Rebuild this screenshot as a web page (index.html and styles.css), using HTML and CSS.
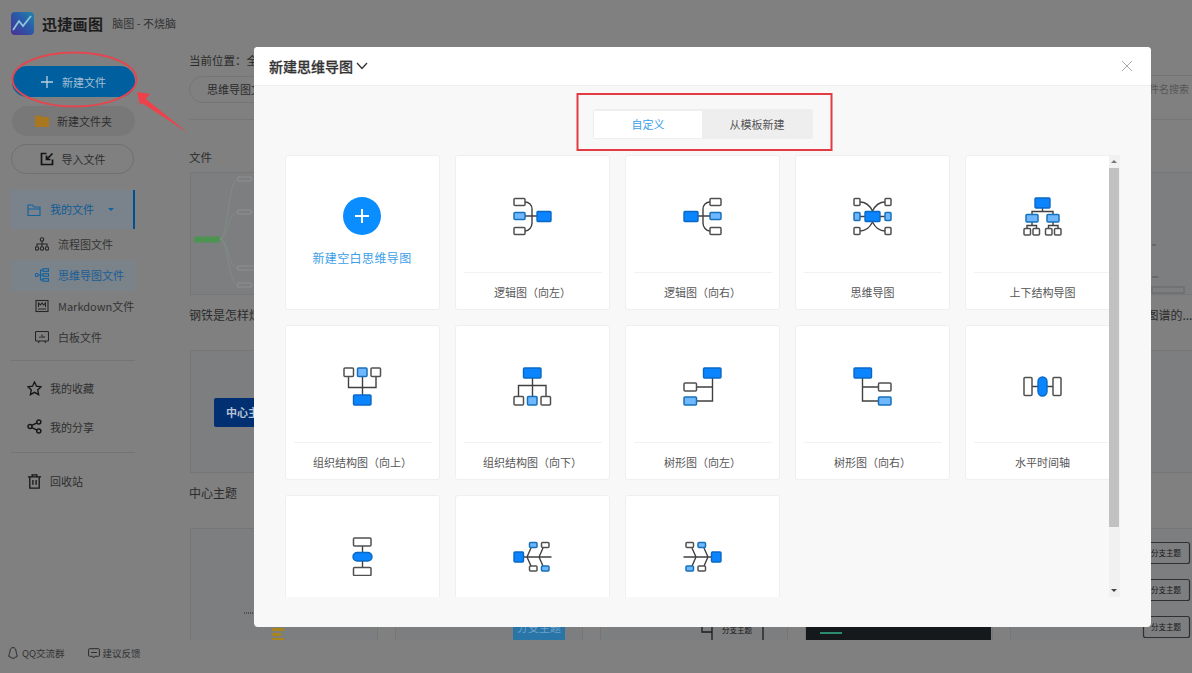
FILE: index.html
```html
<!DOCTYPE html>
<html lang="zh-CN">
<head>
<meta charset="utf-8">
<title>迅捷画图</title>
<link rel="stylesheet" href="styles.css">
</head>
<body>
<div class="app">
  <header class="top">
    <svg class="logo" viewBox="0 0 23 23"><defs><linearGradient id="lg" x1="0" y1="1" x2="1" y2="0"><stop offset="0" stop-color="#4a2f96"/><stop offset=".55" stop-color="#2b5aa8"/><stop offset="1" stop-color="#1f86ac"/></linearGradient></defs><rect width="23" height="23" rx="4" fill="url(#lg)"/><path d="M2 18 L8 9 L12 14 L20 4" fill="none" stroke="#8fc4d8" stroke-width="1.8"/></svg>
    <span class="brand">迅捷画图</span>
    <span class="slogan">脑图 - 不烧脑</span>
  </header>
  <div class="cols">
    <aside class="side">
      <button class="btn primary"><svg class="plus-ic" viewBox="0 0 12 12"><path d="M6 0V12M0 6H12"/></svg>新建文件</button>
      <button class="btn soft"><svg class="folder-ic" viewBox="0 0 14 12"><path d="M0 1.500Q0 .5 1 .5H5L6.500 2H13Q14 2 14 3V11Q14 12 13 12H1Q0 12 0 11Z"/></svg>新建文件夹</button>
      <button class="btn line"><svg class="ic14 import" viewBox="0 0 14 14"><path d="M6.500 1.500H1.500V12.500H12.500V7.500M12.500 1.500 7 7M6.500 3.500V7.500H10.500"/></svg>导入文件</button>
      <div class="myfiles">
        <svg class="ic14 blue" viewBox="0 0 14 14"><path d="M1 2H5.500L7 4H13V12.500H1ZM1 6H13"/></svg>
        <span>我的文件</span><i class="caret"></i>
      </div>
      <a class="sub"><svg class="ic14" viewBox="0 0 14 14"><circle cx="7" cy="2.500" r="1.700"/><circle cx="2" cy="11.500" r="1.700"/><circle cx="7" cy="11.500" r="1.700"/><circle cx="12" cy="11.500" r="1.700"/><path d="M7 4.200V9.800M2 9.800V7H12V9.800"/></svg>流程图文件</a>
      <a class="sub on"><svg class="ic14 blue" viewBox="0 0 14 14"><circle cx="1.800" cy="7" r="1.500"/><rect x="8" y=".8" width="5.500" height="2.600"/><rect x="8" y="5.700" width="5.500" height="2.600"/><rect x="8" y="10.600" width="5.500" height="2.600"/><path d="M3.300 7H8M8 2.100H5.500V11.900H8"/></svg>思维导图文件</a>
      <a class="sub"><svg class="ic14" viewBox="0 0 14 14"><rect x="1" y="1.500" width="12" height="11"/><path d="M3.500 8V4L5.500 6 7 4 8.500 6 10.500 4V8M3 10H11"/></svg>Markdown文件</a>
      <a class="sub"><svg class="ic14" viewBox="0 0 14 14"><rect x=".5" y="1.500" width="13" height="9.500" rx="1"/><path d="M5 8V6.500M7 8V4.500M9 8V6M4 11 3.500 13M10 11 10.500 13"/></svg>白板文件</a>
      <hr class="rule rule-a">
      <a class="nav"><svg class="ic14 dark" viewBox="0 0 16 16"><path d="M8 1 10.100 5.600 15 6.200 11.400 9.600 12.400 14.600 8 12.100 3.600 14.600 4.600 9.600 1 6.200 5.900 5.600Z"/></svg>我的收藏</a>
      <a class="nav"><svg class="ic14 dark" viewBox="0 0 14 14"><circle cx="2.800" cy="7" r="1.900"/><circle cx="11" cy="2.800" r="1.900"/><circle cx="11" cy="11.200" r="1.900"/><path d="M4.500 6 9.300 3.600M4.500 8 9.300 10.400"/></svg>我的分享</a>
      <hr class="rule rule-b">
      <a class="nav"><svg class="ic14 dark" viewBox="0 0 14 16"><path d="M0 3H14M4.500 3V1H9.500V3M2 3V15H12V3M5.300 6.500V11.500M8.700 6.500V11.500"/></svg>回收站</a>
      <footer class="foot">
        <span class="foot-a"><svg class="ic10" viewBox="0 0 10 12"><path d="M5 .6C2.800 .6 2 2.400 2 4.200 2 6 .8 7.200 .8 9 .8 10 1.400 10 2 9.400 2.400 10.800 3.600 11.200 5 11.200S7.600 10.800 8 9.400C8.600 10 9.200 10 9.200 9 9.200 7.200 8 6 8 4.200 8 2.400 7.200 .6 5 .6Z"/></svg>QQ交流群</span>
        <span class="foot-b"><svg class="ic11" viewBox="0 0 12 11"><path d="M1.500 .7H10.500Q11.400 .7 11.400 1.600V7.400Q11.400 8.300 10.500 8.300H6.800L5.500 10 4.800 8.300H1.500Q.6 8.300 .6 7.400V1.600Q.6 .7 1.500 .7ZM3.200 4.500H8.800"/></svg>建议反馈</span>
      </footer>
    </aside>
    <main class="main">
      <div class="crumb">当前位置：全</div>
      <div class="toolbar">
        <span class="pill">思维导图文件</span>
        <span class="search">按文件名搜索</span>
      </div>
      <hr class="main-rule">
      <div class="heading">文件</div>
      <div class="files">
        <div class="tile">
          <div class="thumb"><svg class="mini" viewBox="0 0 188 123"><g class="mm"><path d="M30 67C38 67 38 7 48 7M30 67C38 67 38 40 48 40M30 67C38 67 38 96 48 96M30 67C38 67 38 113 48 113M61 7H66M61 40H66M70 96H66M61 113H66"/></g><rect x="4" y="64.500" width="26" height="6" class="mm-root"/><rect x="48" y="5" width="13" height="4" class="mm-node"/><rect x="48" y="38" width="13" height="4" class="mm-node"/><rect x="48" y="94" width="22" height="4" class="mm-node"/><rect x="48" y="111" width="13" height="4" class="mm-node"/></svg></div>
          <div class="caption">钢铁是怎样炼成的</div>
        </div>
        <div class="tile"><div class="thumb"></div><div class="caption"></div></div>
        <div class="tile"><div class="thumb"></div><div class="caption"></div></div>
        <div class="tile"><div class="thumb"></div><div class="caption"></div></div>
        <div class="tile">
          <div class="thumb"><svg class="mini" viewBox="0 0 188 123"><rect x="142" y="115" width="32" height="6" class="tag"/><path d="M142 73H146M142 105H148" class="tick"/></svg></div>
          <div class="caption">如何绘制一张完整的&nbsp; 知识图谱的...</div>
        </div>
        <div class="tile">
          <div class="thumb"><svg class="mini" viewBox="0 0 188 123"><rect x="24" y="48" width="100" height="29" rx="2" class="navy"/><text x="36" y="67" class="navy-t">中心主题</text></svg></div>
          <div class="caption">中心主题</div>
        </div>
        <div class="tile"><div class="thumb"></div><div class="caption"></div></div>
        <div class="tile"><div class="thumb"></div><div class="caption"></div></div>
        <div class="tile"><div class="thumb"></div><div class="caption"></div></div>
        <div class="tile"><div class="thumb"></div><div class="caption"></div></div>
        <div class="tile">
          <div class="thumb"><svg class="mini" viewBox="0 0 188 123"><path d="M54 85H64" class="dots"/><rect x="82" y="100" width="12" height="3" class="gold"/><rect x="82" y="105" width="9" height="3" class="gold"/><rect x="82" y="110" width="12" height="3" class="gold"/></svg></div>
        </div>
        <div class="tile">
          <div class="thumb"><svg class="mini" viewBox="0 0 188 123"><rect x="118" y="85" width="52" height="27" class="teal"/><text x="144" y="104" class="teal-t">分支主题</text></svg></div>
        </div>
        <div class="tile">
          <div class="thumb"><svg class="mini" viewBox="0 0 188 123"><path d="M102 99V104H112M112 85V123M163 85V123" class="branch"/><text x="137" y="105" class="tiny-t">分支主题</text></svg></div>
        </div>
        <div class="tile">
          <div class="thumb"><svg class="mini" viewBox="0 0 188 123"><rect x="0" y="99" width="186" height="24" class="blackbox"/><rect x="15" y="104" width="22" height="2" class="greenbar"/></svg></div>
        </div>
        <div class="tile">
          <div class="thumb"><svg class="mini" viewBox="0 0 188 123"><rect x="133.500" y="14.500" width="46" height="21" rx="2" class="outline"/><rect x="133.500" y="51.500" width="46" height="21" rx="2" class="outline"/><rect x="133.500" y="88.500" width="46" height="21" rx="2" class="outline"/><text x="156" y="28" class="tiny-t">分支主题</text><text x="156" y="65" class="tiny-t">分支主题</text><text x="156" y="102" class="tiny-t">分支主题</text></svg></div>
        </div>
      </div>
    </main>
  </div>

  <section class="modal">
    <div class="m-head">
      <span class="m-title">新建思维导图</span>
      <svg class="chev" viewBox="0 0 12 8"><path d="M1 1 6 6.500 11 1"/></svg>
      <svg class="close" viewBox="0 0 12 12"><path d="M1 1 11 11M11 1 1 11"/></svg>
    </div>
    <div class="m-body">
      <div class="tabs">
        <span class="tab active">自定义</span>
        <span class="tab">从模板新建</span>
      </div>
      <div class="scroll-wrap">
        <div class="viewport">
          <div class="grid">
            <div class="card new">
              <span class="add"><svg viewBox="0 0 16 16"><path d="M8 1V15M1 8H15"/></svg></span>
              <span class="new-label">新建空白思维导图</span>
            </div>

            <div class="card"><svg class="dg" viewBox="0 0 39 39"><path class="w" d="M12 5C16 5 19 8 19 12V26C19 30 16 34 12 34M12 19H24"/><rect class="n" x="1" y="1.500" width="11" height="7" rx="1"/><rect class="l" x="1" y="15.500" width="11" height="7" rx="1"/><rect class="n" x="1" y="30.500" width="11" height="7" rx="1"/><rect class="b" x="24" y="14.500" width="14" height="10" rx="1"/></svg><div class="lbl">逻辑图（向左）</div></div>

            <div class="card"><svg class="dg" viewBox="0 0 39 39"><path class="w" d="M27 5C23 5 20 8 20 12V26C20 30 23 34 27 34M27 19H15"/><rect class="n" x="27" y="1.500" width="11" height="7" rx="1"/><rect class="l" x="27" y="15.500" width="11" height="7" rx="1"/><rect class="n" x="27" y="30.500" width="11" height="7" rx="1"/><rect class="b" x="1" y="14.500" width="14" height="10" rx="1"/></svg><div class="lbl">逻辑图（向右）</div></div>

            <div class="card"><svg class="dg" viewBox="0 0 39 39"><path class="w" d="M7 5C13 5 17 9 19.500 14 22 9 26 5 32 5M7 34C13 34 17 30 19.500 25 22 30 26 34 32 34M7 19.500H12M27 19.500H32"/><rect class="n" x="1" y="1.500" width="6" height="7" rx="1"/><rect class="l" x="1" y="15.500" width="6" height="8" rx="1"/><rect class="n" x="1" y="30.500" width="6" height="7" rx="1"/><rect class="n" x="32" y="1.500" width="6" height="7" rx="1"/><rect class="l" x="32" y="15.500" width="6" height="8" rx="1"/><rect class="n" x="32" y="30.500" width="6" height="7" rx="1"/><rect class="b" x="12" y="14.500" width="15" height="10" rx="1"/></svg><div class="lbl">思维导图</div></div>

            <div class="card"><svg class="dg" viewBox="0 0 39 39"><path class="w" d="M19.500 11V14.500M9 17V14.500H30V17M9 25V28.500M4 31.500V28.500H13.500V31.500M30 25V28.500M25.500 31.500V28.500H35V31.500"/><rect class="b" x="12" y="1" width="15" height="10" rx="1"/><rect class="l" x="3" y="17.500" width="12" height="7.500" rx="1"/><rect class="l" x="24" y="17.500" width="12" height="7.500" rx="1"/><rect class="n" x="1" y="31.500" width="6.500" height="6.500" rx="1"/><rect class="n" x="10" y="31.500" width="6.500" height="6.500" rx="1"/><rect class="n" x="22.500" y="31.500" width="6.500" height="6.500" rx="1"/><rect class="n" x="31.500" y="31.500" width="6.500" height="6.500" rx="1"/></svg><div class="lbl">上下结构导图</div></div>

            <div class="card"><svg class="dg" viewBox="0 0 39 39"><path class="w" d="M5.500 9.500V20.500H33V9.500M19.500 9.500V28"/><rect class="n" x="1" y="1" width="9.500" height="8.500" rx="1"/><rect class="l" x="14.500" y="1" width="9.500" height="8.500" rx="1"/><rect class="n" x="28" y="1" width="9.500" height="8.500" rx="1"/><rect class="b" x="10.500" y="28" width="17.500" height="10" rx="1"/></svg><div class="lbl">组织结构图（向上）</div></div>

            <div class="card"><svg class="dg" viewBox="0 0 39 39"><path class="w" d="M5.500 29.500V18.500H33V29.500M19.500 11V29.500"/><rect class="b" x="10.500" y="1" width="17.500" height="10" rx="1"/><rect class="n" x="1" y="29.500" width="9.500" height="8.500" rx="1"/><rect class="l" x="14.500" y="29.500" width="9.500" height="8.500" rx="1"/><rect class="n" x="28" y="29.500" width="9.500" height="8.500" rx="1"/></svg><div class="lbl">组织结构图（向下）</div></div>

            <div class="card"><svg class="dg" viewBox="0 0 39 39"><path class="w" d="M29.500 11V34H13.500M29.500 20H13.500"/><rect class="b" x="20.500" y="1" width="17.500" height="10" rx="1"/><rect class="n" x="1" y="16" width="12.500" height="8" rx="1"/><rect class="l" x="1" y="30" width="12.500" height="8" rx="1"/></svg><div class="lbl">树形图（向左）</div></div>

            <div class="card"><svg class="dg" viewBox="0 0 39 39"><path class="w" d="M9.500 11V34H25.500M9.500 20H25.500"/><rect class="b" x="1" y="1" width="17.500" height="10" rx="1"/><rect class="n" x="25.500" y="16" width="12.500" height="8" rx="1"/><rect class="l" x="25.500" y="30" width="12.500" height="8" rx="1"/></svg><div class="lbl">树形图（向右）</div></div>

            <div class="card"><svg class="dg" viewBox="0 0 39 39"><path class="w" d="M9 19.500H15M24 19.500H30"/><rect class="n" x="1" y="10.500" width="8" height="18" rx="1"/><rect class="b" x="15" y="10" width="9" height="19" rx="4.500"/><rect class="n" x="30" y="10.500" width="8" height="18" rx="1"/></svg><div class="lbl">水平时间轴</div></div>

            <div class="card"><svg class="dg" viewBox="0 0 39 39"><path class="w" d="M19.500 9V30"/><rect class="n" x="10.500" y="1" width="17.500" height="8" rx="1"/><rect class="b" x="10" y="15.500" width="19" height="8.500" rx="4.200"/><rect class="n" x="10.500" y="30.500" width="17.500" height="8" rx="1"/></svg></div>

            <div class="card"><svg class="dg" viewBox="0 0 39 39"><path class="w" d="M10.500 20H38.500M14 20 18 11M26 20 30 11M14 20 18 29M26 20 30 29"/><rect class="b" x="1" y="15" width="9.500" height="10" rx="1"/><rect class="l" x="16.500" y="5.500" width="7.500" height="5" rx="1"/><rect class="n" x="28.500" y="5.500" width="7.500" height="5" rx="1"/><rect class="n" x="16.500" y="29" width="7.500" height="5" rx="1"/><rect class="l" x="28.500" y="29" width="7.500" height="5" rx="1"/></svg></div>

            <div class="card"><svg class="dg" viewBox="0 0 39 39"><path class="w" d="M28.500 20H.5M25 20 21 11M13 20 9 11M25 20 21 29M13 20 9 29"/><rect class="b" x="28.500" y="15" width="9.500" height="10" rx="1"/><rect class="l" x="15" y="5.500" width="7.500" height="5" rx="1"/><rect class="n" x="3" y="5.500" width="7.500" height="5" rx="1"/><rect class="n" x="15" y="29" width="7.500" height="5" rx="1"/><rect class="l" x="3" y="29" width="7.500" height="5" rx="1"/></svg></div>
          </div>
        </div>
        <div class="sbar">
          <i class="arr up"></i>
          <div class="thumb-bar"></div>
          <i class="arr down"></i>
        </div>
      </div>
    </div>
  </section>

  <svg class="annot" viewBox="0 0 1192 673">
    <ellipse cx="74.500" cy="79.500" rx="62" ry="27" class="red-line"/>
    <polygon points="137,92 150,94 146,99 188,133 142,103 140,105" class="red-fill"/>
    <rect x="577.500" y="94" width="254" height="56" class="red-box"/>
  </svg>
</div>
</body>
</html>
```

FILE: styles.css
```css
* { box-sizing: border-box; }
html, body { margin: 0; height: 100%; }
body {
  background: #808080;
  color: #2e2e2e;
  font-family: "Noto Sans CJK SC", "Noto Sans", sans-serif;
  font-size: 11px;
  overflow: hidden;
}
.app { position: relative; width: 1192px; height: 673px; overflow: hidden; }

.top { height: 47px; display: flex; align-items: flex-start; padding: 12px 0 0 11px; }
.logo { width: 23px; height: 23px; margin-right: 8px; flex: none; }
.brand { font-size: 15px; line-height: 23px; font-weight: 700; color: #1c1c1c; margin-right: 9px; letter-spacing: .3px; }
.slogan { font-size: 11px; line-height: 23px; color: #333; }

.cols { display: flex; align-items: flex-start; }
.side { width: 150px; height: 626px; flex: none; padding-left: 11px; display: flex; flex-direction: column; }

.btn {
  display: flex; align-items: center; justify-content: center;
  width: 123px; height: 30px; border-radius: 15px; border: 0;
  font: inherit; font-size: 11px; color: #2e2e2e; padding: 0;
}
.primary { height: 31px; margin: 19px 0 9px 1px; background: #00609f; color: #a3bed2; }
.plus-ic { width: 12px; height: 12px; margin-right: 9px; fill: none; stroke: #bcd0df; stroke-width: 1.300; }
.soft { margin: 0 0 8px 1px; background: #787878; }
.folder-ic { width: 14px; height: 12px; margin-right: 8px; fill: #a8771f; }
.line { background: transparent; border: 1px solid #707070; margin-bottom: 16px; }
.line .ic14 { margin-right: 8px; }
.ic14.import { stroke: #141414; stroke-width: 1.700; }

.ic14 { width: 14px; height: 14px; flex: none; fill: none; stroke: #262626; stroke-width: 1.100; }
.ic14.blue { stroke: #10639f; }
.ic14.dark { stroke: #161616; stroke-width: 1.400; width: 15px; height: 15px; }
.ic10 { width: 10px; height: 12px; margin-right: 4px; fill: none; stroke: #2b2b2b; }
.ic11 { width: 12px; height: 11px; margin-right: 3px; fill: none; stroke: #2b2b2b; }

.myfiles {
  display: flex; align-items: center; width: 124px; height: 39px; padding-left: 16px;
  background: #7a838b; border-right: 2px solid #00508f; color: #115a94;
}
.myfiles span { margin-left: 9px; position: relative; top: -1px; }
.caret { width: 0; height: 0; margin-left: 14px; border: 3px solid transparent; border-top: 3.500px solid #10639f; border-bottom: 0; }

.sub { display: flex; align-items: center; width: 124px; height: 31px; padding-left: 24px; padding-bottom: 1px; white-space: nowrap; color: #333; }
.sub .ic14 { margin-right: 9px; }
.sub.on { background: #7a828a; color: #185e96; }

.rule { width: 124px; height: 1px; margin: 0; border: 0; background: #747474; }
.rule-a { margin-top: 7px; margin-bottom: 8px; }
.rule-b { margin-top: 6px; margin-bottom: 9px; }
.nav { display: flex; align-items: center; height: 38.500px; padding-left: 16px; }
.nav .ic14 { margin-right: 8px; }

.foot { margin-top: auto; height: 40px; margin-left: -3px; display: flex; align-items: center; font-size: 9.500px; color: #333; }
.foot-a { display: flex; align-items: center; margin-right: 23px; }
.foot-b { display: flex; align-items: center; }

.main { flex: 1; min-width: 0; height: 593px; overflow: hidden; padding-left: 39px; color: #2b2b2b; }
.crumb { padding-top: 5px; line-height: 16px; font-size: 11.500px; height: 21px; margin-bottom: 7px; }
.toolbar { display: flex; align-items: flex-start; height: 28px; }
.pill {
  width: 120px; height: 27px; margin-top: 1px; padding-left: 17px; line-height: 25px;
  border: 1px solid #757575; border-radius: 14px; font-size: 11px;
}
.search { margin-left: auto; width: 200px; height: 28px; padding: 5px 3px 0 0; text-align: right; border-top: 1px solid #747474; line-height: 16px; color: #565656; font-size: 10px; }
.main-rule { height: 1px; border: 0; margin: 16px 0 0; background: #777; }
.heading { margin-top: 29px; height: 23px; line-height: 17px; font-size: 11.500px; }

.files { display: grid; grid-template-columns: repeat(5, 188px); column-gap: 17px; margin-left: 1px; width: 1010px; }
.tile { min-width: 0; }
.thumb { height: 123px; border: 1px solid #767676; background: #7d7e80; overflow: hidden; }
.tile:nth-child(n+11) .thumb { border-bottom: 0; }
.caption { height: 55px; padding-top: 12px; margin-left: -1px; line-height: 16px; font-size: 12px; white-space: nowrap; }
.mini { display: block; width: 188px; height: 123px; margin: -1px; }

.mm path { fill: none; stroke: #7f9684; stroke-width: .6; }
.mm-root { fill: #4d9450; }
.mm-node { fill: #7d7e80; stroke: #97a699; stroke-width: .5; }
.tag { fill: none; stroke: #666; }
.tick { stroke: #555; fill: none; }
.navy { fill: #002f72; }
.navy-t { font-size: 11px; font-weight: 700; fill: #b6c2d2; }
.dots { stroke: #222; stroke-width: 1; stroke-dasharray: 1 1; }
.gold { fill: #a7851c; }
.teal { fill: #2a75a8; }
.teal-t { font-size: 11px; text-anchor: middle; fill: #6ea2c7; }
.tiny-t { font-size: 7.500px; text-anchor: middle; fill: #161616; }
.branch { fill: none; stroke: #1c1c1c; stroke-width: 1.300; }
.blackbox { fill: #16191c; }
.greenbar { fill: #2c8a6e; }
.outline { fill: none; stroke: #303030; stroke-width: 1.200; }

.modal {
  position: absolute; left: 254px; top: 47px; width: 897px; height: 580px;
  background: #f8f8f8; border-radius: 4px; overflow: hidden; color: #333;
}
.m-head { position: relative; height: 39px; background: #fff; border-bottom: 1px solid #eee; display: flex; align-items: center; padding-left: 15px; }
.m-title { font-size: 14px; font-weight: 500; color: #333; -webkit-text-stroke: .25px #333; }
.chev { width: 12px; height: 8px; margin-left: 3px; fill: none; stroke: #333; stroke-width: 1.300; }
.close { margin-left: auto; margin-right: 18px; width: 12px; height: 12px; fill: none; stroke: #aaa; stroke-width: 1; }

.m-body { display: flex; flex-direction: column; }
.tabs {
  display: flex; align-self: flex-start; margin: 23px 0 16px 339px; width: 220px; height: 30px;
  padding: 2px 0 1px 1px; background: #eee; border-radius: 3px;
}
.tab { width: 108px; line-height: 27px; text-align: center; font-size: 11px; color: #555; }
.tab.active { background: #fff; color: #3c9ee8; }
.tab + .tab { width: 110px; }

.scroll-wrap { display: flex; height: 442px; padding-left: 31px; }
.viewport { width: 824px; height: 442px; overflow: hidden; flex: none; }
.grid { display: grid; grid-template-columns: repeat(5, 155px); grid-auto-rows: 155px; gap: 15px; width: 835px; }
.card {
  background: #fff; border: 1px solid #efefef; border-radius: 3px; padding: 41px 0 0; position: relative;
  display: flex; flex-direction: column; align-items: center;
}
.dg { width: 39px; height: 39px; flex: none; }
.n { fill: #fff; stroke: #505050; stroke-width: 1.500; }
.b { fill: #0a84ff; stroke: #0a68c4; stroke-width: 1.400; }
.l { fill: #6fb8ff; stroke: #1770b8; stroke-width: 1.500; }
.w { fill: none; stroke: #404040; stroke-width: 1.400; }
.lbl {
  margin-top: 36px; width: 138px; border-top: 1px solid #f2f2f2;
  padding-top: 10px; line-height: 18px; text-align: center; font-size: 11px; color: #555;
  white-space: nowrap;
}
.new { padding-top: 41px; }
.add { width: 38px; height: 38px; border-radius: 50%; background: #0a8dff; display: flex; align-items: center; justify-content: center; margin-left: -1px; }
.add svg { width: 16px; height: 16px; fill: none; stroke: #fff; stroke-width: 2; }
.new-label { margin-top: 14px; margin-left: -1px; font-size: 12px; letter-spacing: .4px; color: #3c9ee8; line-height: 18px; white-space: nowrap; }

.sbar { width: 11px; height: 442px; background: #f1f1f1; display: flex; flex-direction: column; align-items: flex-start; }
.thumb-bar { width: 10px; height: 359px; background: #c1c1c1; }
.arr { width: 0; height: 0; border: 3px solid transparent; margin-left: 2px; }
.up { margin-top: 5px; margin-bottom: 4.500px; border-bottom: 3.500px solid #777; border-top: 0; }
.down { margin-top: 62px; border-top: 3.500px solid #444; border-bottom: 0; }

.annot { position: absolute; left: 0; top: 0; width: 1192px; height: 673px; pointer-events: none; }
.red-line { fill: none; stroke: #e2474f; stroke-width: 2; }
.red-fill { fill: #ee4149; }
.red-box { fill: none; stroke: #e23c42; stroke-width: 2; }
```
